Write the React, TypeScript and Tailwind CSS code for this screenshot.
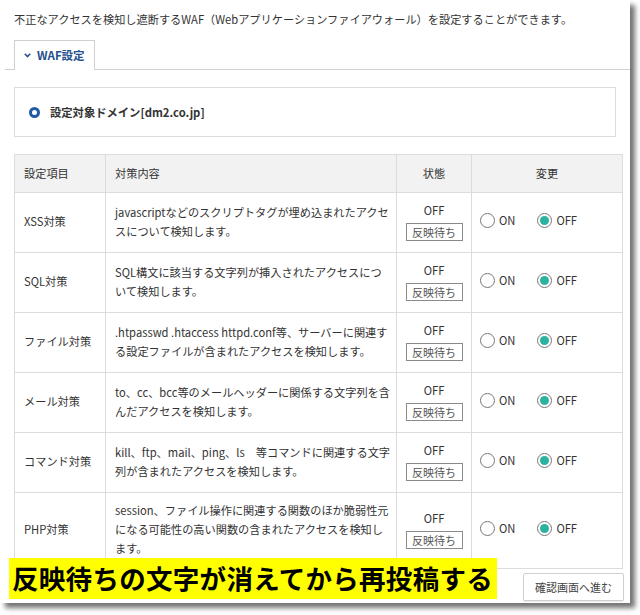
import React from "react";

type Row = {
  name: string;
  lines: string[];
};

const ROWS: Row[] = [
  { name: "XSS対策", lines: ["javascriptなどのスクリプトタグが埋め込まれたアクセ", "スについて検知します。"] },
  { name: "SQL対策", lines: ["SQL構文に該当する文字列が挿入されたアクセスにつ", "いて検知します。"] },
  { name: "ファイル対策", lines: [".htpasswd .htaccess httpd.conf等、サーバーに関連す", "る設定ファイルが含まれたアクセスを検知します。"] },
  { name: "メール対策", lines: ["to、cc、bcc等のメールヘッダーに関係する文字列を含", "んだアクセスを検知します。"] },
  { name: "コマンド対策", lines: ["kill、ftp、mail、ping、ls　等コマンドに関連する文字", "列が含まれたアクセスを検知します。"] },
  {
    name: "PHP対策",
    lines: [
      "session、ファイル操作に関連する関数のほか脆弱性元",
      "になる可能性の高い関数の含まれたアクセスを検知し",
      "ます。",
    ],
  },
];

function Radio({ checked, label }: { checked: boolean; label: string }) {
  return (
    <label className="flex items-center gap-[4px]">
      <span className="w-[15px] h-[15px] rounded-full border border-[#777] bg-white flex items-center justify-center">
        {checked && <span className="w-[9px] h-[9px] rounded-full bg-[#2bb39f]" />}
      </span>
      <span>{label}</span>
    </label>
  );
}

export default function App() {
  return (
    <div className="w-[640px] h-[615px] bg-white relative text-[#333] font-['Noto_Sans_CJK_JP','Noto_Sans',sans-serif]">
      <div className="w-[630px] h-[603px] bg-white shadow-[5px_5px_5px_rgba(0,0,0,0.55)] overflow-hidden">
        {/* Lead */}
        <p className="pl-[14px] pt-[11px] text-[11.2px] leading-[16px]">
          不正なアクセスを検知し遮断するWAF（Webアプリケーションファイアウォール）を設定することができます。
        </p>

        {/* Tab */}
        <div className="ml-[5px] mt-[13px] pl-[9px] border-b border-[#d0d0d0] flex">
          <div className="-mb-px h-[30px] w-[81px] border border-b-0 border-[#d0d0d0] bg-white flex items-center pl-[9px] gap-[6px] text-[11.5px] font-bold text-[#24508c]">
            <svg width="7" height="5" viewBox="0 0 7 5" fill="none">
              <path d="M0.8 0.8L3.5 3.6L6.2 0.8" stroke="#24508c" strokeWidth="1.6" />
            </svg>
            <span>WAF設定</span>
          </div>
        </div>

        {/* Domain */}
        <div className="mx-[14px] mt-[17px] h-[50px] border border-[#dcdcdc] flex items-center pl-[14px] gap-[10px] text-[11.3px] font-bold text-[#333]">
          <span className="w-[11px] h-[11px] rounded-full border-[3px] border-[#1f5aa6]" />
          <span>設定対象ドメイン[dm2.co.jp]</span>
        </div>

        {/* Table */}
        <table className="ml-[14px] mt-[17px] w-[608px] border-collapse table-fixed text-[11.2px]">
          <colgroup>
            <col className="w-[91px]" />
            <col className="w-[291px]" />
            <col className="w-[75px]" />
            <col className="w-[151px]" />
          </colgroup>
          <thead>
            <tr className="h-[38px] bg-[#f2f2f2]">
              <th className="border border-[#dcdcdc] text-left font-normal pl-[9px]">設定項目</th>
              <th className="border border-[#dcdcdc] text-left font-normal pl-[9px]">対策内容</th>
              <th className="border border-[#dcdcdc] text-center font-normal">状態</th>
              <th className="border border-[#dcdcdc] text-center font-normal">変更</th>
            </tr>
          </thead>
          <tbody>
            {ROWS.map((r) => (
              <tr key={r.name} className="h-[60px]">
                <td className="border border-[#dcdcdc] pl-[9px] pb-[2px] align-middle">{r.name}</td>
                <td className="border border-[#dcdcdc] pl-[9px] pr-[4px] pt-[8px] pb-[10px] leading-[19px] align-middle">
                  {r.lines.map((l, i) => (
                    <div key={i} className="whitespace-nowrap">
                      {l}
                    </div>
                  ))}
                </td>
                <td className="border border-[#dcdcdc] pb-[3px] align-middle">
                  <div className="flex flex-col items-center">
                    <span className="leading-[18px]">OFF</span>
                    <span className="mt-[4px] w-[57px] h-[18px] border border-[#8a8a8a] flex items-center justify-center text-[11px] text-[#555]">
                      反映待ち
                    </span>
                  </div>
                </td>
                <td className="border border-[#dcdcdc] pb-[4px] align-middle">
                  <div className="flex items-center pl-[8px] gap-[22px]">
                    <Radio checked={false} label="ON" />
                    <Radio checked={true} label="OFF" />
                  </div>
                </td>
              </tr>
            ))}
          </tbody>
        </table>

        {/* Footer button */}
        <div className="flex justify-end pr-[6px] mt-[4px]">
          <button className="w-[101px] h-[28px] border border-[#cfcfcf] bg-white rounded-[2px] text-[11px] text-[#444] shadow-[0_1px_1px_rgba(0,0,0,0.08)]">
            確認画面へ進む
          </button>
        </div>
      </div>

      {/* Annotation banner */}
      <div className="absolute left-[9px] top-[558px] w-[488px] h-[41px] bg-[#ffff00] flex items-center pl-[3px] text-[26.5px] font-bold text-black leading-none tracking-[0.3px]">
        反映待ちの文字が消えてから再投稿する
      </div>
    </div>
  );
}
